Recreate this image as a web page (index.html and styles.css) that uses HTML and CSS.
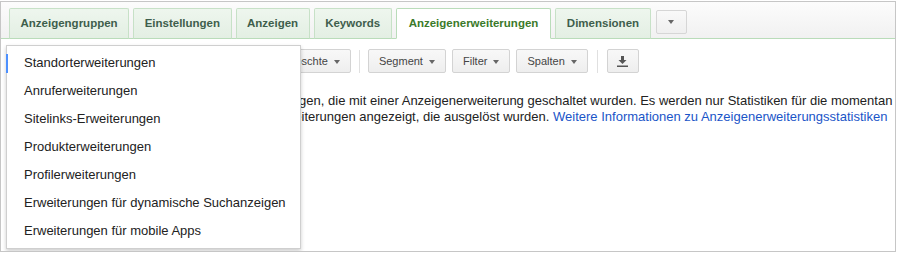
FILE: index.html
```html
<!DOCTYPE html>
<html lang="de">
<head>
    <meta charset="UTF-8">
    <title>Anzeigenerweiterungen</title>
    <link rel="stylesheet" href="styles.css">
</head>
<body>
    <div class="panel">
        <div class="tabbar">
            <div class="tab">Anzeigengruppen</div>
            <div class="tab">Einstellungen</div>
            <div class="tab">Anzeigen</div>
            <div class="tab">Keywords</div>
            <div class="tab active">Anzeigenerweiterungen</div>
            <div class="tab">Dimensionen</div>
            <div class="more-btn"><span class="caret"></span></div>
        </div>

        <div class="toolbar">
            <div class="btn view-btn">Ansicht: Standorterweiterungen <span class="caret"></span></div>
            <div class="btn">Alle außer gelöschte <span class="caret"></span></div>
            <div class="sep"></div>
            <div class="btn">Segment <span class="caret"></span></div>
            <div class="btn">Filter <span class="caret"></span></div>
            <div class="btn">Spalten <span class="caret"></span></div>
            <div class="sep wide"></div>
            <div class="btn icon-btn">
                <svg width="11" height="11" viewBox="0 0 11 11">
                    <path d="M4 0h3v4h2.5L5.5 8 1.5 4H4z" fill="#555"/>
                    <rect x="0" y="9.5" width="11" height="1.5" fill="#555"/>
                </svg>
            </div>
        </div>

        <p class="info">
            Diese Tabelle enthält Statistiken für alle Ihre Anzeigen, die mit einer Anzeigenerweiterung geschaltet wurden. Es werden nur Statistiken für die momentan<br>
            in Ihrem Konto aktuell vorhandenen Anzeigenerweiterungen angezeigt, die ausgelöst wurden. <a href="#">Weitere Informationen zu Anzeigenerweiterungsstatistiken</a>
        </p>

        <ul class="menu">
            <li class="focused">Standorterweiterungen</li>
            <li>Anruferweiterungen</li>
            <li>Sitelinks-Erweiterungen</li>
            <li>Produkterweiterungen</li>
            <li>Profilerweiterungen</li>
            <li>Erweiterungen für dynamische Suchanzeigen</li>
            <li>Erweiterungen für mobile Apps</li>
        </ul>
    </div>
</body>
</html>
```

FILE: styles.css
```css
body {
    margin: 0;
    font-family: "Liberation Sans", Arial, sans-serif;
    background: #fff;
}
.panel {
    position: relative;
    width: 896px;
    height: 251px;
    margin-top: 1px;
    box-sizing: border-box;
    border: 1px solid #c6c6c6;
    overflow: hidden;
}
.tabbar {
    display: flex;
    align-items: flex-end;
    height: 37px;
    box-sizing: border-box;
    padding: 5px 0 0 8px;
    background: linear-gradient(#fcfcfc, #f1f1f1);
    border-bottom: 1px solid #b9dcb9;
}
.tab {
    height: 31px;
    line-height: 29px;
    box-sizing: border-box;
    margin-right: 4px;
    margin-bottom: -1px;
    padding: 0 10.5px;
    font-size: 11.5px;
    font-weight: bold;
    color: #3e5e4c;
    background: linear-gradient(#eef6ee, #e3efe3);
    border: 1px solid #c7e1c7;
    border-bottom-color: #b9dcb9;
    border-radius: 2px 2px 0 0;
}
.tab.active {
    background: #fff;
    color: #3b7a2a;
    border-color: #b9dcb9;
    border-bottom-color: #fff;
    padding: 0 12px;
}
.more-btn {
    display: flex;
    align-items: center;
    justify-content: center;
    width: 31px;
    height: 24px;
    box-sizing: border-box;
    margin: 0 0 4px 1px;
    background: linear-gradient(#f9f9f9, #efefef);
    border: 1px solid #d6d6d6;
    border-radius: 2px;
}
.caret {
    display: inline-block;
    width: 0;
    height: 0;
    border-left: 3.5px solid transparent;
    border-right: 3.5px solid transparent;
    border-top: 4px solid #666;
    vertical-align: middle;
    margin-left: 3px;
}
.more-btn .caret {
    margin-left: 0;
}
.toolbar {
    display: flex;
    align-items: center;
    gap: 6px;
    margin-top: 10px;
    padding-left: 22px;
}
.btn {
    height: 24px;
    line-height: 22px;
    box-sizing: border-box;
    padding: 0 10px;
    font-size: 11px;
    color: #444;
    background: linear-gradient(#f8f8f8, #eeeeee);
    border: 1px solid #d3d3d3;
    border-radius: 2px;
    white-space: nowrap;
}
.sep {
    width: 1px;
    height: 23px;
    margin: 0 2px;
    background: #e0e0e0;
}
.sep.wide {
    margin: 0 3px;
}
.icon-btn {
    width: 32px;
    display: flex;
    align-items: center;
    justify-content: center;
    padding: 0;
}
.info {
    margin: 20px 0 0;
    padding-left: 10px;
    font-size: 13px;
    line-height: 16px;
    color: #222;
}
.info a {
    color: #1a55c8;
    text-decoration: none;
}
.menu {
    position: absolute;
    left: 5px;
    top: 43px;
    width: 295px;
    box-sizing: border-box;
    margin: 0;
    padding: 3px 0;
    list-style: none;
    background: #fff;
    border: 1px solid #cfcfcf;
    box-shadow: 0 2px 4px rgba(0, 0, 0, 0.2);
}
.menu li {
    position: relative;
    height: 28px;
    line-height: 28px;
    padding-left: 17px;
    font-size: 13px;
    color: #222;
}
.menu li.focused::before {
    content: "";
    position: absolute;
    left: -1px;
    top: 5px;
    width: 2px;
    height: 19px;
    background: #4d90fe;
}
```
